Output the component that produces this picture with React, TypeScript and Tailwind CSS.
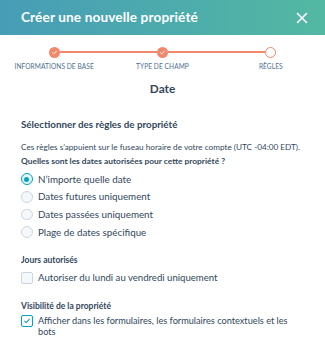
import React from "react";

const steps = [
  { label: "INFORMATIONS DE BASE", done: true },
  { label: "TYPE DE CHAMP", done: true },
  { label: "RÈGLES", done: false },
];

const radios = [
  "N’importe quelle date",
  "Dates futures uniquement",
  "Dates passées uniquement",
  "Plage de dates spécifique",
];

const Check = ({ className }: { className: string }) => (
  <svg viewBox="0 0 12 12" className={className} fill="none">
    <path
      d="M2.5 6.3l2.3 2.2 4.7-5"
      stroke="currentColor"
      strokeWidth="1.6"
      strokeLinecap="round"
      strokeLinejoin="round"
    />
  </svg>
);

export default function App() {
  return (
    <div
      className="w-[325px] h-[343px] bg-white overflow-hidden text-[#33475b]"
      style={{ fontFamily: "Lato, 'Noto Sans', sans-serif" }}
    >
      {/* Header */}
      <div className="h-[35px] px-[21px] flex items-center justify-between bg-gradient-to-r from-[#479db6] to-[#53b8a2]">
        <h1 className="text-white text-[13.6px] font-bold tracking-[0.01em]">
          Créer une nouvelle propriété
        </h1>
        <svg viewBox="0 0 12 12" className="w-[12px] h-[12px] text-white -mr-[4px]">
          <path
            d="M1.5 1.5l9 9M10.5 1.5l-9 9"
            stroke="currentColor"
            strokeWidth="1.6"
            strokeLinecap="round"
          />
        </svg>
      </div>

      {/* Stepper */}
      <div className="grid grid-cols-3 pt-[11.5px]">
        {steps.map((step, i) => (
          <div key={step.label} className="flex flex-col items-center">
            <div className="flex items-center w-full">
              <div
                className={`flex-1 h-[1.5px] ${i === 0 ? "" : "bg-[#f2876b]"}`}
              />
              {step.done ? (
                <div className="w-[11px] h-[11px] rounded-full bg-[#f2876b] flex items-center justify-center">
                  <Check className="w-[7px] h-[7px] text-white" />
                </div>
              ) : (
                <div className="w-[11px] h-[11px] rounded-full border-[1.5px] border-[#f2876b] bg-white" />
              )}
              <div
                className={`flex-1 h-[1.5px] ${
                  i === steps.length - 1 ? "" : "bg-[#f2876b]"
                }`}
              />
            </div>
            <span className="mt-[4.7px] text-[6.6px] leading-[9px] text-[#516f90] tracking-[0.01em]">
              {step.label}
            </span>
          </div>
        ))}
      </div>

      <h2 className="mt-[10px] text-center text-[11.8px] leading-[16px] font-bold">
        Date
      </h2>

      {/* Rules */}
      <div className="px-[21px] mt-[20px]">
        <h3 className="text-[9.8px] leading-[14px] font-bold">
          Sélectionner des règles de propriété
        </h3>
        <p className="mt-[10.7px] text-[8.2px] leading-[10px] whitespace-nowrap">
          Ces règles s’appuient sur le fuseau horaire de votre compte (UTC -04:00 EDT).
        </p>
        <p className="mt-[4.3px] text-[8.4px] leading-[10px] font-bold">
          Quelles sont les dates autorisées pour cette propriété ?
        </p>

        <div className="mt-[4.2px] flex flex-col">
          {radios.map((label, i) => (
            <label key={label} className="flex items-center gap-[5.5px] h-[17.6px]">
              {i === 0 ? (
                <span className="w-[11.5px] h-[11.5px] rounded-full border-[1.5px] border-[#00a4bd] bg-[#e5f5f8] flex items-center justify-center">
                  <span className="w-[5px] h-[5px] rounded-full bg-[#00a4bd]" />
                </span>
              ) : (
                <span className="w-[11.5px] h-[11.5px] rounded-full border border-[#cbd6e2] bg-[#f5f8fa]" />
              )}
              <span className="text-[9.8px]">{label}</span>
            </label>
          ))}
        </div>

        <p className="mt-[14.4px] text-[8.5px] leading-[10px] font-bold">Jours autorisés</p>
        <label className="mt-[6.7px] h-[12px] flex items-center gap-[5.5px]">
          <span className="w-[11.5px] h-[11.5px] rounded-[2px] border border-[#cbd6e2] bg-[#f5f8fa]" />
          <span className="text-[9.6px]">Autoriser du lundi au vendredi uniquement</span>
        </label>

        <p className="mt-[17px] text-[8.5px] leading-[10px] font-bold">
          Visibilité de la propriété
        </p>
        <label className="mt-[4.5px] flex items-start gap-[5.5px]">
          <span className="shrink-0 w-[11.5px] h-[11.5px] rounded-[2px] border-[1.5px] border-[#00a4bd] bg-white flex items-center justify-center">
            <Check className="w-[8px] h-[8px] text-[#00a4bd]" />
          </span>
          <span className="text-[9.2px] leading-[11px]">
            Afficher dans les formulaires, les formulaires contextuels et les bots
          </span>
        </label>
      </div>
    </div>
  );
}
